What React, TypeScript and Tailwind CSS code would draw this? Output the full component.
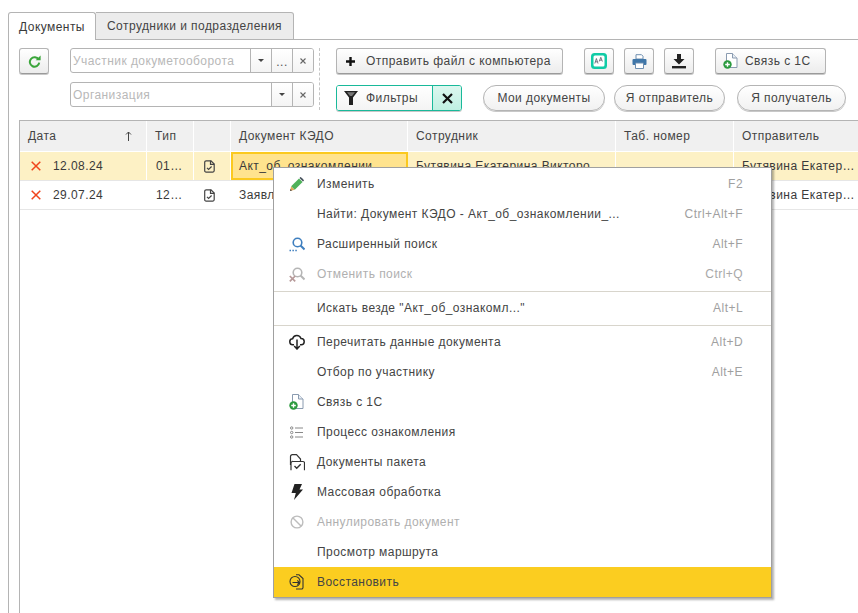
import React from "react";

const Refresh = () => (
  <svg width="13" height="13" viewBox="0 0 13 13" fill="none">
    <path d="M10.6 4.6A4.7 4.7 0 1 0 11.2 7.6" stroke="#3aa53a" strokeWidth="2" />
    <path d="M7.6 5.2h5V.4z" fill="#3aa53a" />
  </svg>
);
const Arrow = () => (
  <svg width="6" height="3" viewBox="0 0 6 3"><path d="M0 0h6L3 3z" fill="#444" /></svg>
);
const Cross = () => (
  <svg width="6" height="6" viewBox="0 0 6 6"><path d="M.5.5l5 5M5.500.5l-5 5" stroke="#666" strokeWidth="1.1" /></svg>
);
const RedX = () => (
  <svg width="10" height="10" viewBox="0 0 10 10"><path d="M.7.7l8.600 8.600M9.300.7l-8.600 8.600" stroke="#f0441c" strokeWidth="1.5" /></svg>
);
const DocCheck = () => (
  <svg width="11" height="13" viewBox="0 0 11 13" fill="none" stroke="#444" strokeWidth="1.2">
    <path d="M2.200.8H7L10.200 4V10.500a1.600 1.600 0 0 1-1.600 1.700H2.200A1.500 1.500 0 0 1 .7 10.500V2.300A1.500 1.500 0 0 1 2.200.8z" />
    <path d="M6.500.8v3.500h3.700" />
    <path d="M3 7.800l1.600 1.600 3-2.900" />
  </svg>
);
const Link1C = () => (
  <svg width="15" height="16" viewBox="0 0 15 16">
    <path d="M3.500.5H9.500L14 5V14.500H3.500z" fill="#fff" stroke="#8a9bb0" />
    <path d="M9.500.5V5H14" fill="#e7edf3" stroke="#8a9bb0" />
    <circle cx="4.500" cy="11.500" r="4.200" fill="#2b9a3e" />
    <path d="M4.500 9.200v4.600M2.200 11.500h4.600" stroke="#fff" strokeWidth="1.400" />
  </svg>
);
const Pencil = () => (
  <svg width="14" height="14" viewBox="0 0 14 14">
    <path d="M0 14l1.200-4.800 3.600 3.600z" fill="#e3a85c" />
    <path d="M0 14l.5-2 1.500 1.500z" fill="#444" />
    <path d="M1.200 9.200L9 1.400l3.600 3.600-7.800 7.800z" fill="#4fb15a" />
    <path d="M9.500.9l1-.9c.5 0 3.500 2.800 3.500 3.500l-1 1z" fill="#46505c" />
  </svg>
);
const Search = ({ c, x }: { c: string; x?: boolean }) => (
  <svg width="16" height="15" viewBox="0 0 16 15" fill="none">
    <circle cx="8.500" cy="5.500" r="4.300" stroke={c} strokeWidth="1.600" />
    <path d="M11.500 8.500l4 4" stroke={c} strokeWidth="2" />
    {x ? (
      <path d="M.8 9l5.400 5.400M6.200 9L.8 14.400" stroke="#b79a9a" strokeWidth="1.700" />
    ) : (
      <path d="M.5 13.500h1.500M3.400 13.500h1.500M6.300 13.500h1.500" stroke={c} strokeWidth="1.500" />
    )}
  </svg>
);
const Cloud = () => (
  <svg width="16" height="16" viewBox="0 0 16 16" fill="none" stroke="#222" strokeWidth="1.500">
    <path d="M5 10.800H4A3 3 0 0 1 3.600 4.800 4.400 4.400 0 0 1 12 4.600a3.100 3.100 0 0 1 .2 6.200H11" />
    <path d="M8 5.500v9.500M5.200 12L8 15l2.800-3" />
  </svg>
);
const ListIcon = () => (
  <svg width="13" height="13" viewBox="0 0 13 13" fill="none" stroke="#888" strokeWidth="1">
    <circle cx="1.700" cy="2" r="1.200" /><circle cx="1.700" cy="6.500" r="1.200" /><circle cx="1.700" cy="11" r="1.200" />
    <path d="M5 2h8M5 6.500h8M5 11h8" />
  </svg>
);
const Package = () => (
  <svg width="16" height="17" viewBox="0 0 16 17" fill="none" stroke="#333" strokeWidth="1.200">
    <path d="M1.500 11V2.500A1.800 1.800 0 0 1 3.300.7H7.500L11.500 5V7" />
    <path d="M4 7.500h10a1.500 1.500 0 0 1 1.500 1.500v7.200M2 16.200v-7A1.700 1.700 0 0 1 4 7.500" fill="#fff" />
    <path d="M5.500 12l2.200 2.200 4-4" strokeWidth="1.400" />
  </svg>
);
const Bolt = () => (
  <svg width="12" height="16" viewBox="0 0 12 16"><path d="M3.500 0H11L8.500 5.500H12L3 16l1.800-7H0.500z" fill="#222" /></svg>
);
const Ban = () => (
  <svg width="14" height="14" viewBox="0 0 14 14" fill="none" stroke="#bdbdbd" strokeWidth="1.400">
    <circle cx="7" cy="7" r="5.900" /><path d="M3 3l8 8" />
  </svg>
);
const Restore = () => (
  <svg width="15" height="16" viewBox="0 0 15 16" fill="none" stroke="#333" strokeWidth="1.100">
    <path d="M7 .8H10L14 4.500V13.500a1.500 1.500 0 0 1-1.500 1.500H7" />
    <circle cx="6" cy="7.500" r="5" />
    <path d="M3.500 8.500H10.500M8.300 6.300L10.500 8.500 8.300 10.700" />
  </svg>
);
const Plus = () => (
  <svg width="9" height="9" viewBox="0 0 9 9"><path d="M4.500 0v9M0 4.500h9" stroke="#111" strokeWidth="2.400" /></svg>
);
const AaIcon = () => (
  <svg width="16" height="16" viewBox="0 0 16 16">
    <rect x="0" y="0" width="16" height="16" rx="3.500" fill="#11cba6" />
    <rect x="2.500" y="2.500" width="11" height="11" rx="1.500" fill="#fff" />
    <path d="M3.800 10.500l1.600-5 1.600 5M4.500 8.800h1.800M8.200 8.500l1.600-4.200 1.600 4.200M8.900 7.200h1.800" stroke="#556" strokeWidth=".8" fill="none" />
  </svg>
);
const Printer = () => (
  <svg width="15" height="15" viewBox="0 0 15 15">
    <path d="M4 .7h5.500L11 2.200V5H4z" fill="#fff" stroke="#6f8fb0" />
    <rect x="0.500" y="5" width="14" height="6" rx="1" fill="#3f76a8" />
    <path d="M3.500 9h8v5.500h-8z" fill="#fff" stroke="#6f8fb0" />
  </svg>
);
const Download = () => (
  <svg width="14" height="15" viewBox="0 0 14 15">
    <path d="M5 0h4v5h3.500L7 10.500 1.500 5H5z" fill="#222" />
    <rect x="0" y="12" width="14" height="2.400" fill="#222" />
  </svg>
);
const Funnel = () => (
  <svg width="14" height="14" viewBox="0 0 14 14">
    <path d="M0 0h14L9 6.500V14H5V6.500z" fill="#222" />
    <path d="M3 1.200h8L8 5H6z" fill="#777" />
  </svg>
);
const SortUp = () => (
  <svg width="7" height="10" viewBox="0 0 7 10" fill="none" stroke="#444" strokeWidth="1">
    <path d="M3.500 10V1M1 3.500L3.500 1 6 3.500" />
  </svg>
);

const btn =
  "flex items-center justify-center h-[26px] rounded-[3px] border border-[#b4b4b4] border-b-[#9a9a9a] bg-gradient-to-b from-white to-[#ececec] shadow-[0_1px_0_#c8c8c8]";
const pill =
  "flex items-center justify-center h-[26px] rounded-full border border-[#b4b4b4] bg-gradient-to-b from-white to-[#f1f1f1] shadow-[0_1px_0_#c8c8c8]";

function Field({ text, dots }: { text: string; dots?: boolean }) {
  const seg = "w-[21px] flex items-center justify-center border-l border-[#b4b4b4] bg-gradient-to-b from-white to-[#f4f4f4]";
  return (
    <div className="flex h-[25px] w-[244px] rounded-[3px] border border-[#b4b4b4] overflow-hidden">
      <div className="flex-1 pl-[2px] flex items-center text-[#b8b8b8]">{text}</div>
      <div className={seg}><Arrow /></div>
      {dots && <div className={seg + " text-[#555] pt-[3px]"}>...</div>}
      <div className={seg}><Cross /></div>
    </div>
  );
}

const cols = [
  { w: "w-[127px]", t: "Дата" },
  { w: "w-[47px]", t: "Тип" },
  { w: "w-[37px]", t: "" },
  { w: "w-[177px]", t: "Документ КЭДО" },
  { w: "w-[208px]", t: "Сотрудник" },
  { w: "w-[118px]", t: "Таб. номер" },
  { w: "w-[125px]", t: "Отправитель" },
];

function Row({ sel, date, type, doc, emp, sender }: { sel?: boolean; date: string; type: string; doc: string; emp: string; sender: string }) {
  const bg = sel ? "bg-[#fdf1c5]" : "bg-white";
  const cell = "flex items-center shrink-0 border-r border-white overflow-hidden whitespace-nowrap " + bg;
  return (
    <div className="flex h-[29px] border-b border-[#e6e6e6] text-[#3a3a3a]">
      <div className={cell + " w-[127px] pl-[11px] gap-[12px]"}><RedX /><span>{date}</span></div>
      <div className={cell + " w-[47px] pl-[9px]"}>{type}</div>
      <div className={cell + " w-[37px] pl-[10px]"}><DocCheck /></div>
      <div className={"flex items-center shrink-0 overflow-hidden whitespace-nowrap w-[177px] pl-[6px] border-2 " + (sel ? "bg-[#ffe38e] border-[#fbc91f]" : "bg-white border-white")}>{doc}</div>
      <div className={cell + " w-[208px] pl-[8px]"}>{emp}</div>
      <div className={cell + " w-[118px]"} />
      <div className={cell + " w-[125px] pl-[8px]"}>{sender}</div>
    </div>
  );
}

function Item({ icon, text, sc, dis, hi }: { icon?: React.ReactNode; text: string; sc?: string; dis?: boolean; hi?: boolean }) {
  return (
    <div className={"flex items-center h-[30px] " + (hi ? "bg-[#fbcd20] " : "") + (dis ? "text-[#b0b0b0]" : "text-[#444]")}>
      <div className="w-[43px] pl-[2px] flex justify-center shrink-0">{icon}</div>
      <div className="flex-1 whitespace-nowrap">{text}</div>
      {sc && <div className={"pr-[28px] " + (dis ? "text-[#a8a8a8]" : "text-[#a0a0a0]")}>{sc}</div>}
    </div>
  );
}
const Sep = () => <div className="h-[4px] flex items-center"><div className="h-px w-full bg-[#d8d5cc]" /></div>;

export default function App() {
  return (
    <div
      className="relative w-[858px] h-[613px] overflow-hidden bg-white flex flex-col text-[12px] tracking-[0.44px] text-[#444]"
      style={{ fontFamily: '"Liberation Sans", Arial, sans-serif' }}
    >
      <div className="flex h-[40px] pt-[12px] shrink-0">
        <div className="w-[8px] shrink-0" />
        <div className="w-[88px] h-[28px] flex items-center justify-center rounded-t-[3px] border border-b-0 border-[#b4b4b4] bg-white text-[#3a3a3a]">Документы</div>
        <div className="w-[198px] h-[28px] flex items-center justify-center rounded-tr-[3px] border-t border-r border-b border-[#b4b4b4] bg-[#ececec]">Сотрудники и подразделения</div>
        <div className="flex-1 border-b border-[#b4b4b4]" />
      </div>
      <div className="flex-1 ml-[8px] border-l border-[#b4b4b4] pl-[10px] flex flex-col min-h-0">
        <div className="flex h-[80px] pt-[8px] shrink-0">
          <button className={btn + " w-[30px]"}><Refresh /></button>
          <div className="ml-[21px] flex flex-col gap-[9px]">
            <Field text="Участник докуметооборота" dots />
            <Field text="Организация" />
          </div>
          <div className="ml-[5px] h-[62px] border-l border-dashed border-[#c4c4c4]" />
          <div className="ml-[16px] flex flex-col gap-[11px]">
            <div className="flex">
              <button className={btn + " w-[227px] justify-start pl-[9px] gap-[11px]"}><Plus /><span>Отправить файл с компьютера</span></button>
              <button className={btn + " w-[30px] ml-[21px]"}><AaIcon /></button>
              <button className={btn + " w-[30px] ml-[10px]"}><Printer /></button>
              <button className={btn + " w-[30px] ml-[10px]"}><Download /></button>
              <button className={btn + " w-[111px] ml-[21px] justify-start pl-[7px] gap-[7px]"}><Link1C /><span>Связь с 1С</span></button>
            </div>
            <div className="flex">
              <div className="flex h-[26px] w-[126px] rounded-[3px] border border-[#19b99a] shadow-[0_1px_0_#c8c8c8] overflow-hidden">
                <div className="w-[95px] flex items-center pl-[7px] gap-[8px] bg-gradient-to-b from-white to-[#f4f4f4]"><Funnel /><span>Фильтры</span></div>
                <div className="flex-1 flex items-center justify-center border-l border-[#19b99a] bg-gradient-to-b from-[#dcf7ef] to-[#bff0e2]">
                  <svg width="11" height="11" viewBox="0 0 11 11"><path d="M1 1l9 9M10 1L1 10" stroke="#111" strokeWidth="2.200" /></svg>
                </div>
              </div>
              <button className={pill + " w-[122px] ml-[21px]"}>Мои документы</button>
              <button className={pill + " w-[111px] ml-[9px]"}>Я отправитель</button>
              <button className={pill + " w-[109px] ml-[12px]"}>Я получатель</button>
            </div>
          </div>
        </div>
        <div className="flex-1 border-l border-t border-[#b4b4b4] min-h-0">
          <div className="flex h-[31px] border-b border-white">
            {cols.map((c, i) => (
              <div key={i} className={c.w + " shrink-0 flex items-center pl-[8px] bg-[#f0f0f0] border-r border-white relative"}>
                {c.t}
                {i === 0 && <span className="absolute right-[14px] top-[10px] flex"><SortUp /></span>}
              </div>
            ))}
          </div>
          <Row sel date="12.08.24" type="01…" doc="Акт_об_ознакомлении_" emp="Бутявина Екатерина Викторо…" sender="Бутявина Екатер…" />
          <Row date="29.07.24" type="12…" doc="Заявление" emp="Бутявина Екатерина Викторо…" sender="Бутявина Екатер…" />
        </div>
      </div>
      <div className="absolute left-[273px] top-[167px] w-[499px] h-[431px] bg-white border border-[#a0a0a0] pt-[1px] shadow-[2px_2px_2px_rgba(0,0,0,0.3)]">
        <Item icon={<Pencil />} text="Изменить" sc="F2" />
        <Item text="Найти: Документ КЭДО - Акт_об_ознакомлении_..." sc="Ctrl+Alt+F" />
        <Item icon={<Search c="#3f7fbf" />} text="Расширенный поиск" sc="Alt+F" />
        <Item dis icon={<Search c="#b5b5b5" x />} text="Отменить поиск" sc="Ctrl+Q" />
        <Sep />
        <Item text={'Искать везде "Акт_об_ознакомл..."'} sc="Alt+L" />
        <Sep />
        <Item icon={<Cloud />} text="Перечитать данные документа" sc="Alt+D" />
        <Item text="Отбор по участнику" sc="Alt+E" />
        <Item icon={<Link1C />} text="Связь с 1С" />
        <Item icon={<ListIcon />} text="Процесс ознакомления" />
        <Item icon={<Package />} text="Документы пакета" />
        <Item icon={<Bolt />} text="Массовая обработка" />
        <Item dis icon={<Ban />} text="Аннулировать документ" />
        <Item text="Просмотр маршрута" />
        <Item hi icon={<Restore />} text="Восстановить" />
      </div>
    </div>
  );
}
